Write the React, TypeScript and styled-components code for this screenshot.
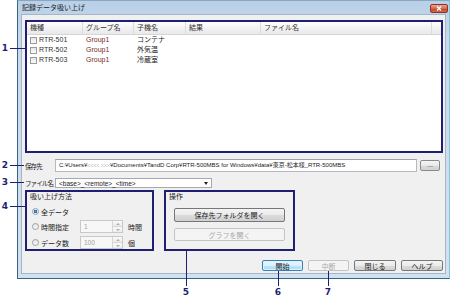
import React from 'react';
import styled, { createGlobalStyle } from 'styled-components';

const NAVY = '#1e1e72';
const FONT = '"Liberation Sans", "Noto Sans CJK JP", sans-serif';

const GlobalStyle = createGlobalStyle`
  html, body { margin: 0; padding: 0; background: #fff; }
  body { font-family: ${FONT}; font-size: 7px; color: #1a1a1a; }
  * { box-sizing: border-box; }
`;

const Page = styled.div`
  position: relative;
  width: 450px;
  height: 298px;
  overflow: hidden;
`;

// Dialog frame
const Dialog = styled.div`
  margin-left: 17px;
  width: 433px;
  height: 279px;
  display: flex;
  flex-direction: column;
  border: 1px solid #3a6581;
  border-top-color: #8ea6bd;
  border-right-color: #7fc8de;
  background: linear-gradient(#b8d0e8, #c8daee 40px, #d2e1f1);
`;

const TitleBar = styled.div`
  flex: 0 0 13px;
  display: flex;
  align-items: flex-start;
  justify-content: space-between;
  padding-left: 4px;
  padding-right: 1px;
`;

const TitleText = styled.span`
  line-height: 13px;
  font-size: 7px;
  color: #1b1b1b;
`;

const CloseButton = styled.div`
  margin-top: 3px;
  width: 18px;
  height: 9px;
  border: 1px solid #8a3324;
  border-radius: 2px;
  background: linear-gradient(#eba593, #d9664e 50%, #c23d25 51%, #d56a4c);
  display: flex;
  align-items: center;
  justify-content: center;
`;

const Client = styled.div`
  flex: 1;
  margin: 0 3px 4px 3px;
  background: #f0f0f0;
  border: 1px solid #a3b6ca;
  padding: 5px 2px 0 3px;
  display: flex;
  flex-direction: column;
`;

// List view
const ListView = styled.div`
  flex: 0 0 133px;
  background: #fff;
  border: 2px solid ${NAVY};
`;

const HeaderRow = styled.div`
  display: flex;
  height: 13px;
  background: linear-gradient(#ffffff, #f3f3f3 50%, #e9e9e9);
  border-bottom: 1px solid #d5d5d5;
`;

const HeaderCell = styled.div<{ $w: number }>`
  flex: 0 0 ${(p) => p.$w}px;
  padding-left: 3px;
  line-height: 12px;
  color: #333;
  border-right: 1px solid #dcdcdc;
`;

const HeaderFill = styled.div`
  flex: 1;
`;

const ItemRow = styled.div`
  display: flex;
  height: 10px;
  align-items: center;
  &:first-of-type {
    margin-top: 2px;
  }
`;

const ItemCell = styled.div<{ $w: number; $color?: string }>`
  flex: 0 0 ${(p) => p.$w}px;
  padding-left: 3px;
  display: flex;
  align-items: center;
  gap: 2px;
  color: ${(p) => p.$color || '#1a1a1a'};
  line-height: 10px;
`;

const Check = styled.span`
  width: 7px;
  height: 7px;
  border: 1px solid #9a9a9a;
  background: linear-gradient(#e6e6e6, #fbfbfb);
`;

// Form rows
const FieldRow = styled.div<{ $top: number; $h: number }>`
  display: flex;
  align-items: center;
  margin-top: ${(p) => p.$top}px;
  flex: 0 0 ${(p) => p.$h}px;
  min-height: 0;
`;

const FieldLabel = styled.span`
  flex: 0 0 30px;
  white-space: nowrap;
  font-size: 6.5px;
  letter-spacing: -0.9px;
  color: #1a1a1a;
`;

const TextBox = styled.div`
  flex: 0 0 362px;
  height: 13px;
  background: #fff;
  border: 1px solid #b5b9c0;
  border-top-color: #9ea3ab;
  padding-left: 3px;
  font-size: 6px;
  line-height: 11px;
  white-space: nowrap;
  overflow: hidden;
  color: #222;
`;

const Blur = styled.span`
  color: #c4c4c4;
  filter: blur(0.6px);
`;

const Browse = styled.div`
  margin-left: 3px;
  flex: 0 0 20px;
  height: 11px;
  border: 1px solid #8a8a8a;
  border-radius: 2px;
  background: linear-gradient(#f6f6f6, #e8e8e8 50%, #dadada 51%, #d2d2d2);
  text-align: center;
  line-height: 7px;
  color: #333;
`;

const Select = styled.div`
  flex: 0 0 157px;
  height: 10px;
  background: #fff;
  border: 1px solid #a5a9b0;
  display: flex;
  align-items: center;
  justify-content: space-between;
  padding: 0 3px;
  font-size: 6.5px;
`;

const Caret = styled.span`
  width: 0;
  height: 0;
  border-left: 2.5px solid transparent;
  border-right: 2.5px solid transparent;
  border-top: 3px solid #222;
`;

// Group boxes
const GroupRow = styled.div`
  display: flex;
  gap: 10px;
  margin-top: 2px;
  flex: 0 0 60px;
`;

const Group = styled.div<{ $w: number }>`
  flex: 0 0 ${(p) => p.$w}px;
  border: 2px solid ${NAVY};
  padding: 0 3px;
  display: flex;
  flex-direction: column;
`;

const GroupTitle = styled.div`
  height: 10px;
  line-height: 10px;
`;

const RadioRow = styled.div<{ $top: number }>`
  display: flex;
  align-items: center;
  height: 13px;
  margin-top: ${(p) => p.$top}px;
`;

const RadioWrap = styled.div`
  flex: 0 0 50px;
  display: flex;
  align-items: center;
  gap: 2px;
  padding-left: 2px;
`;

const Radio = styled.span<{ $on?: boolean }>`
  width: 7px;
  height: 7px;
  border-radius: 50%;
  border: 1px solid #9aa0a6;
  background: ${(p) =>
    p.$on
      ? 'radial-gradient(circle, #4d9de0 0, #2167b5 1.6px, #e8eef4 2px)'
      : 'linear-gradient(#e4e4e4, #fafafa)'};
`;

const Spinner = styled.div`
  flex: 0 0 43px;
  height: 13px;
  display: flex;
  background: #f7f7f7;
  border: 1px solid #c9c9c9;
`;

const SpinValue = styled.span`
  flex: 1;
  padding-left: 3px;
  line-height: 11px;
  color: #a0a0a0;
  font-size: 6.5px;
`;

const SpinButtons = styled.div`
  flex: 0 0 10px;
  display: flex;
  flex-direction: column;
  border-left: 1px solid #d6d6d6;
`;

const SpinHalf = styled.div<{ $up?: boolean }>`
  flex: 1;
  display: flex;
  align-items: center;
  justify-content: center;
  background: linear-gradient(#fafafa, #ececec);
  & + & {
    border-top: 1px solid #d6d6d6;
  }
  &::after {
    content: '';
    border-left: 2px solid transparent;
    border-right: 2px solid transparent;
    ${(p) => (p.$up ? 'border-bottom' : 'border-top')}: 2px solid #b0b0b0;
  }
`;

const Unit = styled.span`
  margin-left: 5px;
`;

const OpButton = styled.div<{ $disabled?: boolean; $top: number; $h: number }>`
  margin: ${(p) => p.$top}px 0 0 5px;
  width: 111px;
  height: ${(p) => p.$h}px;
  border-radius: 2px;
  border: 1px solid ${(p) => (p.$disabled ? '#c2c5c8' : '#777')};
  background: ${(p) =>
    p.$disabled
      ? '#f4f4f4'
      : 'linear-gradient(#f4f4f4, #ebebeb 50%, #dcdcdc 51%, #d0d0d0)'};
  color: ${(p) => (p.$disabled ? '#a8a8a8' : '#1a1a1a')};
  display: flex;
  align-items: center;
  justify-content: center;
`;

// Bottom buttons
const ButtonBar = styled.div`
  display: flex;
  justify-content: flex-end;
  gap: 5px;
  margin-top: 9px;
`;

type Kind = 'normal' | 'focus' | 'disabled';

const DlgButton = styled.div<{ $w: number; $kind: Kind }>`
  width: ${(p) => p.$w}px;
  height: 11px;
  border-radius: 2px;
  border: 1px solid
    ${(p) =>
      p.$kind === 'focus' ? '#3c7fb1' : p.$kind === 'disabled' ? '#c2c5c8' : '#777'};
  background: ${(p) =>
    p.$kind === 'focus'
      ? 'linear-gradient(#eaf6fd, #d9f0fc 50%, #bee6fd 51%, #a7d9f5)'
      : p.$kind === 'disabled'
        ? '#f4f4f4'
        : 'linear-gradient(#f4f4f4, #ebebeb 50%, #dcdcdc 51%, #d0d0d0)'};
  box-shadow: ${(p) => (p.$kind === 'focus' ? 'inset 0 0 0 1px #d8f2ff' : 'none')};
  color: ${(p) => (p.$kind === 'disabled' ? '#a8a8a8' : '#1a1a1a')};
  display: flex;
  align-items: center;
  justify-content: center;
`;

// Callouts (drawn over the screenshot)
const CalloutNum = styled.span`
  position: absolute;
  width: 10px;
  height: 10px;
  line-height: 10px;
  text-align: center;
  font-family: 'DejaVu Sans', sans-serif;
  font-weight: bold;
  font-size: 9px;
  color: ${NAVY};
`;

const CalloutLine = styled.span`
  position: absolute;
  background: ${NAVY};
`;

const columns = [56, 51, 52, 75, 171];
const headers = ['機種', 'グループ名', '子機名', '結果', 'ファイル名'];
const items = [
  ['RTR-501', 'Group1', 'コンテナ'],
  ['RTR-502', 'Group1', '外気温'],
  ['RTR-503', 'Group1', '冷蔵室'],
];

const callouts = [
  { n: 1, nx: 5, ny: 48, lx: 10, ly: 48, lw: 16, lh: 1 },
  { n: 2, nx: 5, ny: 165, lx: 10, ly: 165, lw: 14, lh: 1 },
  { n: 3, nx: 5, ny: 182, lx: 10, ly: 182, lw: 14, lh: 1 },
  { n: 4, nx: 5, ny: 206, lx: 10, ly: 206, lw: 15, lh: 1 },
  { n: 5, nx: 186, ny: 292, lx: 186, ly: 251, lw: 1, lh: 35 },
  { n: 6, nx: 278, ny: 292, lx: 278, ly: 271, lw: 1, lh: 15 },
  { n: 7, nx: 328, ny: 292, lx: 328, ly: 271, lw: 1, lh: 15 },
];

export default function App() {
  return (
    <Page>
      <GlobalStyle />
      <Dialog>
        <TitleBar>
          <TitleText>記録データ吸い上げ</TitleText>
          <CloseButton>
            <svg width="6" height="5" viewBox="0 0 6 5">
              <path d="M1 0.5 L5 4.5 M5 0.5 L1 4.5" stroke="#fff" strokeWidth="1.4" />
            </svg>
          </CloseButton>
        </TitleBar>
        <Client>
          <ListView>
            <HeaderRow>
              {headers.map((h, i) => (
                <HeaderCell key={h} $w={columns[i]}>
                  {h}
                </HeaderCell>
              ))}
              <HeaderFill />
            </HeaderRow>
            {items.map(([model, group, name]) => (
              <ItemRow key={model}>
                <ItemCell $w={columns[0]} $color="#333">
                  <Check />
                  {model}
                </ItemCell>
                <ItemCell $w={columns[1]} $color="#7a2a1c">
                  {group}
                </ItemCell>
                <ItemCell $w={columns[2]}>{name}</ItemCell>
              </ItemRow>
            ))}
          </ListView>

          <FieldRow $top={6} $h={13}>
            <FieldLabel>保存先</FieldLabel>
            <TextBox>
              C:¥Users¥<Blur>xxxx.xxx</Blur>¥Documents¥TandD Corp¥RTR-500MBS for
              Windows¥data¥東京-松本様_RTR-500MBS
            </TextBox>
            <Browse>...</Browse>
          </FieldRow>

          <FieldRow $top={6} $h={10}>
            <FieldLabel>ファイル名</FieldLabel>
            <Select>
              <span>&lt;base&gt;_&lt;remote&gt;_&lt;time&gt;</span>
              <Caret />
            </Select>
          </FieldRow>

          <GroupRow>
            <Group $w={129}>
              <GroupTitle>吸い上げ方法</GroupTitle>
              <RadioRow $top={3}>
                <RadioWrap>
                  <Radio $on />
                  全データ
                </RadioWrap>
              </RadioRow>
              <RadioRow $top={2}>
                <RadioWrap>
                  <Radio />
                  時間指定
                </RadioWrap>
                <Spinner>
                  <SpinValue>1</SpinValue>
                  <SpinButtons>
                    <SpinHalf $up />
                    <SpinHalf />
                  </SpinButtons>
                </Spinner>
                <Unit>時間</Unit>
              </RadioRow>
              <RadioRow $top={3}>
                <RadioWrap>
                  <Radio />
                  データ数
                </RadioWrap>
                <Spinner>
                  <SpinValue>100</SpinValue>
                  <SpinButtons>
                    <SpinHalf $up />
                    <SpinHalf />
                  </SpinButtons>
                </Spinner>
                <Unit>個</Unit>
              </RadioRow>
            </Group>
            <Group $w={131}>
              <GroupTitle>操作</GroupTitle>
              <OpButton $top={6} $h={14}>
                保存先フォルダを開く
              </OpButton>
              <OpButton $top={6} $h={13} $disabled>
                グラフを開く
              </OpButton>
            </Group>
          </GroupRow>

          <ButtonBar>
            <DlgButton $w={41} $kind="focus">
              開始
            </DlgButton>
            <DlgButton $w={41} $kind="disabled">
              中断
            </DlgButton>
            <DlgButton $w={42} $kind="normal">
              閉じる
            </DlgButton>
            <DlgButton $w={42} $kind="normal">
              ヘルプ
            </DlgButton>
          </ButtonBar>
        </Client>
      </Dialog>

      {callouts.map((c) => (
        <React.Fragment key={c.n}>
          <CalloutLine style={{ left: c.lx, top: c.ly, width: c.lw, height: c.lh }} />
          <CalloutNum style={{ left: c.nx - 5, top: c.ny - 5 }}>{c.n}</CalloutNum>
        </React.Fragment>
      ))}
    </Page>
  );
}
